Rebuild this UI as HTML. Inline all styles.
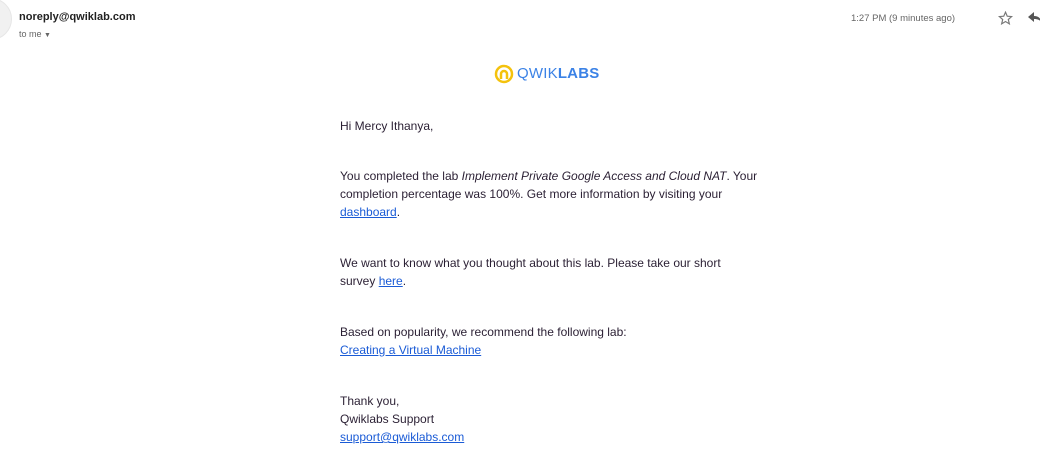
<!DOCTYPE html>
<html><head><style>
body{margin:0;width:1040px;height:476px;background:#fff;font-family:"Liberation Sans",Arial,sans-serif;position:relative;overflow:hidden}
.abs{position:absolute}
.av{left:-30px;top:-2px;width:40px;height:40px;border-radius:50%;background:#f1f1f1;border:1px solid #e6e6e6}
.from{left:19px;top:11px;font-size:11px;font-weight:bold;color:#222}
.tome{left:19px;top:29px;font-size:9px;color:#666}
.time{left:851px;top:13px;font-size:9.5px;color:#666}
.body{left:340px;top:117px;width:440px;font-size:12px;line-height:18px;color:#2a1f33;white-space:nowrap}
.body p{margin:0}
a{color:#1a5bd6;text-decoration:underline}
</style></head><body>
<div class="abs av"></div>
<div class="abs from">noreply@qwiklab.com</div>
<div class="abs tome">to me <span style="font-size:7px">&#9660;</span></div>
<div class="abs time">1:27 PM (9 minutes ago)</div>
<svg class="abs" style="left:998px;top:11px" width="15" height="14" viewBox="0 0 24 24"><path d="M12 2l3 7 7.5.6-5.7 5 1.8 7.4L12 18l-6.6 4 1.8-7.4-5.7-5L9 9z" fill="none" stroke="#777" stroke-width="2"/></svg>
<svg class="abs" style="left:1028px;top:12px" width="14" height="12" viewBox="0 0 14 12"><path d="M6 0L0 5l6 5V7c4 0 6 1 8 4-1-4-3-7-8-7z" fill="#555"/></svg>
<svg class="abs" style="left:494px;top:64px" width="20" height="20" viewBox="0 0 20 20"><circle cx="10" cy="10" r="8" fill="none" stroke="#f4c20d" stroke-width="2.5"/><path d="M7 15V10a3 3 0 0 1 6 0v5" fill="none" stroke="#f4c20d" stroke-width="2.5"/></svg>
<div class="abs" style="left:517px;top:65px;font-size:15px;color:#3b82e6;letter-spacing:0.2px">QWIK<b>LABS</b></div>
<div class="abs body">
<p>Hi Mercy Ithanya,</p>
<p style="margin-top:32px">You completed the lab <i>Implement Private Google Access and Cloud NAT</i>. Your<br>completion percentage was 100%. Get more information by visiting your<br><a>dashboard</a>.</p>
<p style="margin-top:33px">We want to know what you thought about this lab. Please take our short<br>survey <a>here</a>.</p>
<p style="margin-top:33px">Based on popularity, we recommend the following lab:<br><a>Creating a Virtual Machine</a></p>
<p style="margin-top:33px">Thank you,<br>Qwiklabs Support<br><a>support@qwiklabs.com</a></p>
</div>
</body></html>
